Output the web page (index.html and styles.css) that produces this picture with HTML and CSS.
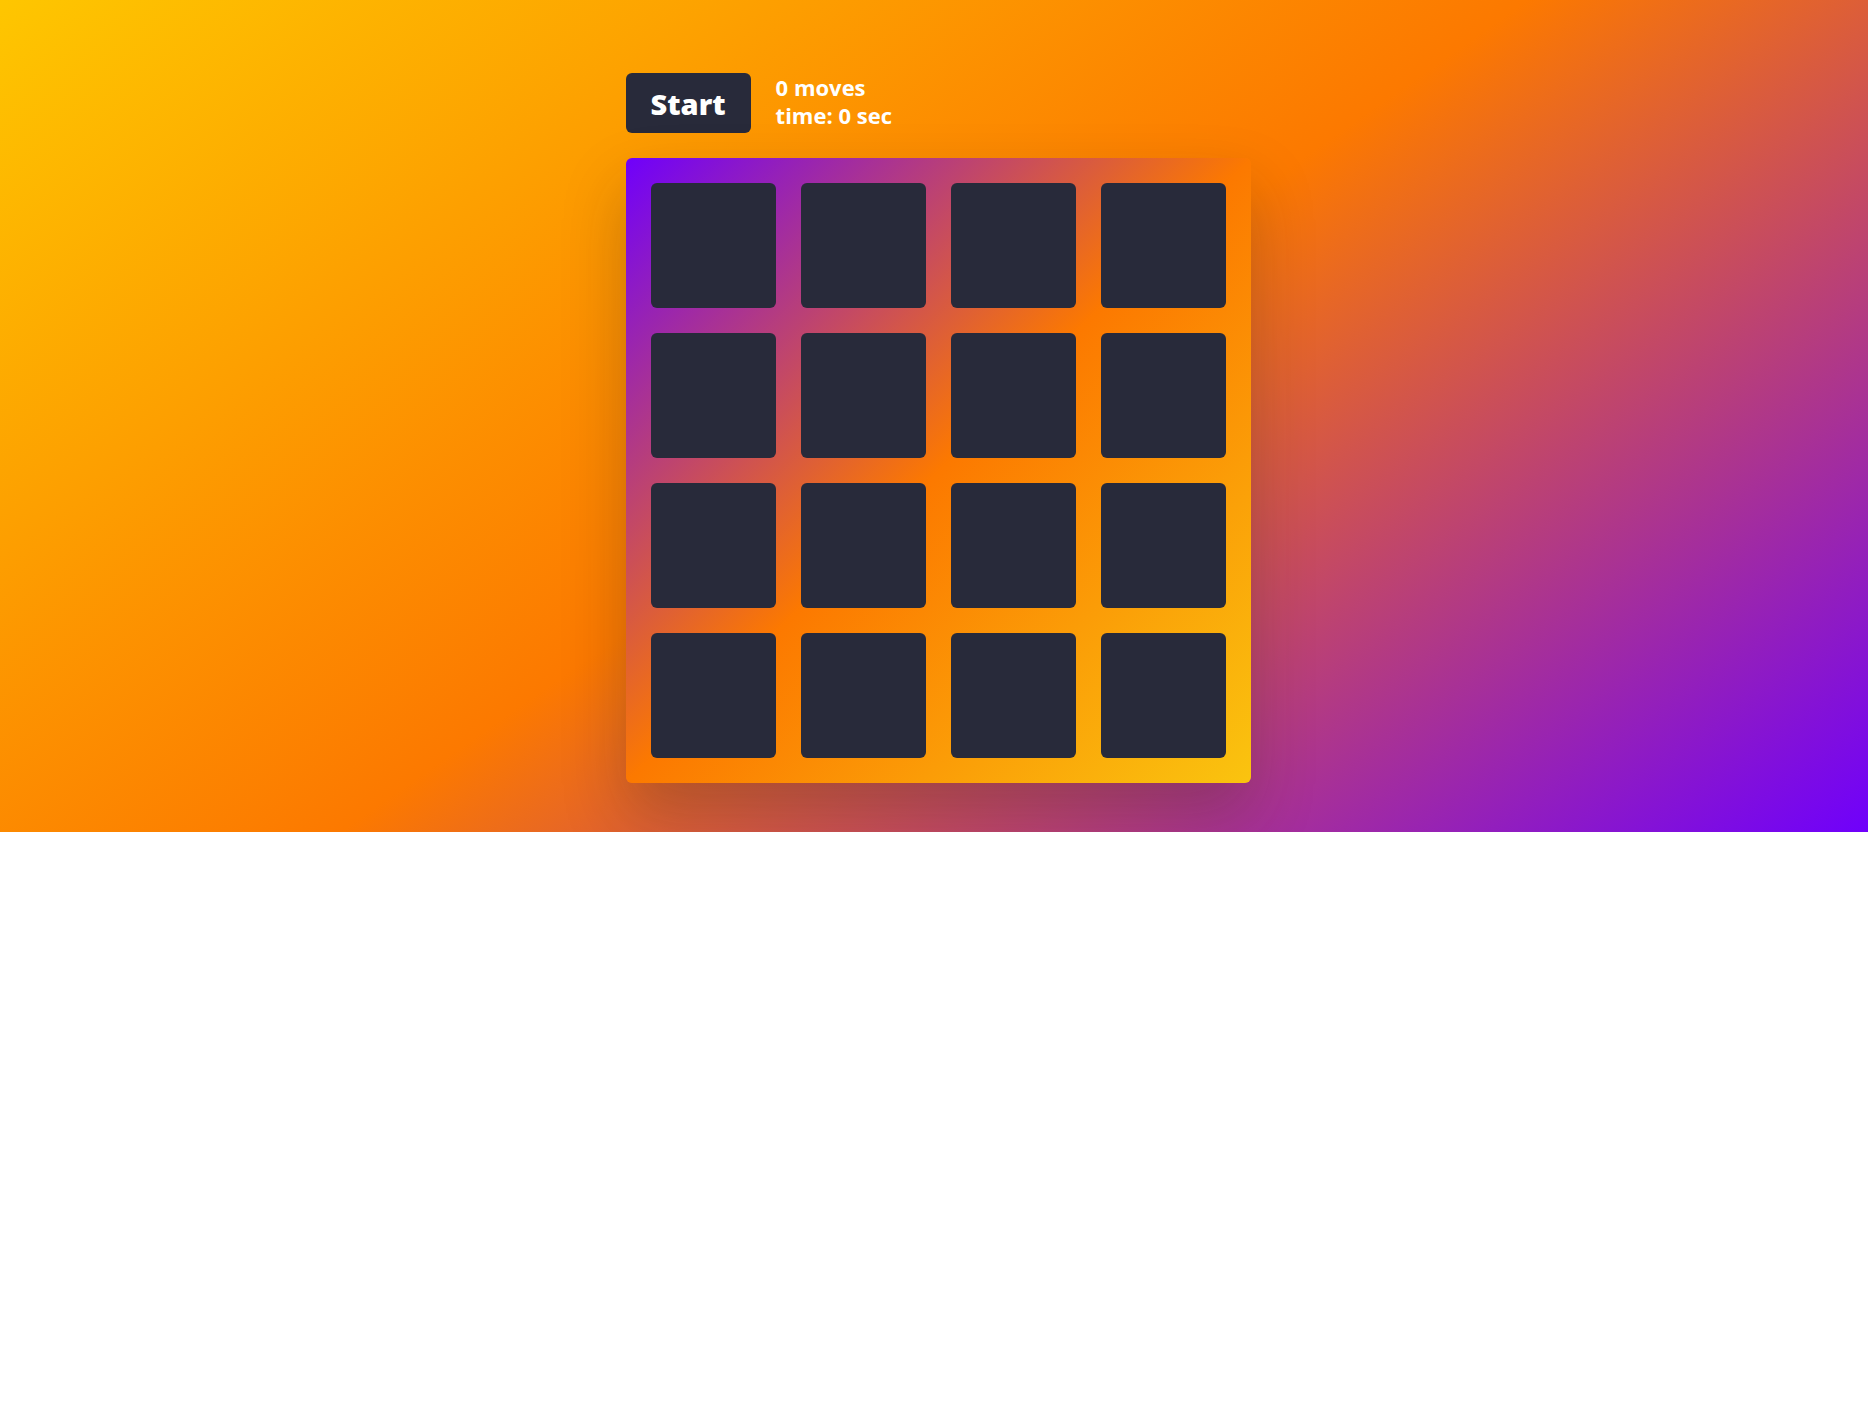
FILE: index.html
```html
<!DOCTYPE html>
<html lang="en">
<head>
<meta charset="utf-8">
<title>Memory Game</title>
<link rel="stylesheet" href="styles.css">
</head>
<body>
<div class="stage">
  <div class="game">
    <div class="controls">
      <button class="start">Start</button>
      <div class="stats">
        <div class="moves">0 moves</div>
        <div class="timer">time: 0 sec</div>
      </div>
    </div>
    <div class="board">
      <div class="card"></div><div class="card"></div><div class="card"></div><div class="card"></div>
      <div class="card"></div><div class="card"></div><div class="card"></div><div class="card"></div>
      <div class="card"></div><div class="card"></div><div class="card"></div><div class="card"></div>
      <div class="card"></div><div class="card"></div><div class="card"></div><div class="card"></div>
    </div>
  </div>
</div>
</body>
</html>
```
FILE: styles.css
```css
html, body {
  margin: 0;
  padding: 0;
  background: #fff;
}
.stage {
  height: 832px;
  box-sizing: border-box;
  padding: 73px 0 0 8px;
  display: flex;
  justify-content: center;
  align-items: flex-start;
  background: linear-gradient(325deg, #6f00fc 0%, #fc7900 50%, #fec600 100%);
  font-family: "Open Sans", "Liberation Sans", sans-serif;
}
.game {
  display: flex;
  flex-direction: column;
  gap: 25px;
}
.controls {
  display: flex;
  gap: 25px;
  align-items: flex-start;
}
.start {
  background: #282a3a;
  color: #fff;
  border: 0;
  border-radius: 6px;
  padding: 12.5px 25px;
  font-family: "Open Sans", "Liberation Sans", sans-serif;
  font-size: 29px;
  font-weight: 800;
  line-height: 35px;
  cursor: pointer;
}
.stats {
  color: #fff;
  font-size: 22px;
  font-weight: 700;
  line-height: 28px;
  padding-top: 0;
}
.board {
  padding: 25px;
  display: grid;
  grid-template-columns: repeat(4, 125px);
  gap: 25px;
  border-radius: 6px;
  background: linear-gradient(135deg, #6f00fc 0%, #fc7900 50%, #fac40f 100%);
  box-shadow: 0 31px 62px rgba(33, 33, 33, 0.25);
}
.card {
  width: 125px;
  height: 125px;
  border-radius: 6px;
  background: #282a3a;
}
```
